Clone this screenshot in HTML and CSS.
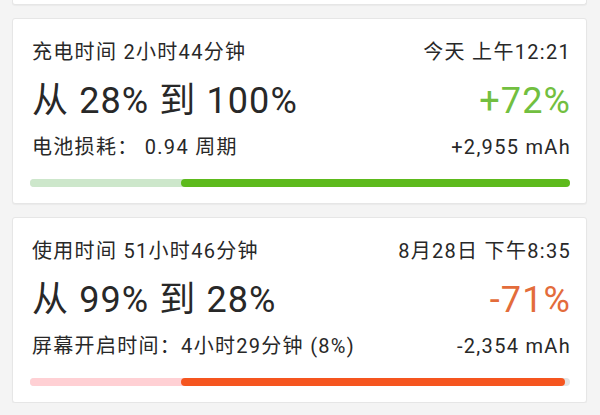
FILE: index.html
```html
<!DOCTYPE html>
<html lang="zh-CN">
<head>
<meta charset="utf-8">
<link rel="stylesheet" href="styles.css">
</head>
<body>
<div class="list">
  <div class="card stub"></div>

  <div class="card">
    <div class="row head">
      <span>充电时间 2小时44分钟</span>
      <span>今天 上午12:21</span>
    </div>
    <div class="row big">
      <span>从 28% 到 100%</span>
      <span class="pct up">+72%</span>
    </div>
    <div class="row sub">
      <span>电池损耗： 0.94 周期</span>
      <span>+2,955 mAh</span>
    </div>
    <div class="bar">
      <div class="seg light-green" style="width:28%"></div>
      <div class="seg green" style="width:72%"></div>
    </div>
  </div>

  <div class="card">
    <div class="row head">
      <span>使用时间 51小时46分钟</span>
      <span>8月28日 下午8:35</span>
    </div>
    <div class="row big">
      <span>从 99% 到 28%</span>
      <span class="pct down">-71%</span>
    </div>
    <div class="row sub">
      <span>屏幕开启时间：4小时29分钟 (8%)</span>
      <span>-2,354 mAh</span>
    </div>
    <div class="bar">
      <div class="seg light-red" style="width:28%"></div>
      <div class="seg red" style="width:71%"></div>
    </div>
  </div>
</div>
</body>
</html>
```

FILE: styles.css
```css
html, body {
  margin: 0;
  padding: 0;
  background: #f4f4f4;
}

body {
  font-family: Roboto, "Noto Sans CJK SC", sans-serif;
  color: #282828;
}

.list {
  display: flex;
  flex-direction: column;
  gap: 13px;
  padding: 0 13px 0 12px;
}

.card {
  background: #fff;
  border: 1px solid #e6e6e6;
  border-radius: 3px;
  box-shadow: 0 1px 1px rgba(0, 0, 0, 0.04);
  padding: 22px 16px 16px 17px;
  display: flex;
  flex-direction: column;
}

.card.stub {
  height: 4px;
  padding: 0;
  border-top: none;
  border-radius: 0 0 3px 3px;
}

.row {
  display: flex;
  justify-content: space-between;
  align-items: center;
  padding: 0 0 0 2px;
  white-space: nowrap;
}

.row span:last-child {
  margin-right: -1px;
}

.head {
  font-size: 20px;
  line-height: 22px;
  letter-spacing: 1.3px;
}

.big {
  margin-top: 18px;
  font-size: 36px;
  line-height: 40px;
  letter-spacing: 1.1px;
}

.sub {
  margin-top: 15px;
  font-size: 20px;
  line-height: 22px;
  letter-spacing: 1.3px;
}

.pct.up {
  color: #72bf40;
}

.pct.down {
  color: #e36c3b;
}

.bar {
  margin-top: 21px;
  height: 8px;
  border-radius: 4px;
  background: #e4e4e4;
  display: flex;
}

.seg {
  height: 100%;
  border-radius: 4px;
  flex-shrink: 0;
}

.light-green,
.light-red {
  padding-right: 4px;
  margin-right: -4px;
  border-radius: 4px 0 0 4px;
}

.light-green {
  background: #cde7cb;
}

.light-red {
  background: #ffd0d4;
}

.green,
.red {
  position: relative;
}

.green {
  background: #5dba1c;
}

.red {
  background: #f5551f;
}
```
